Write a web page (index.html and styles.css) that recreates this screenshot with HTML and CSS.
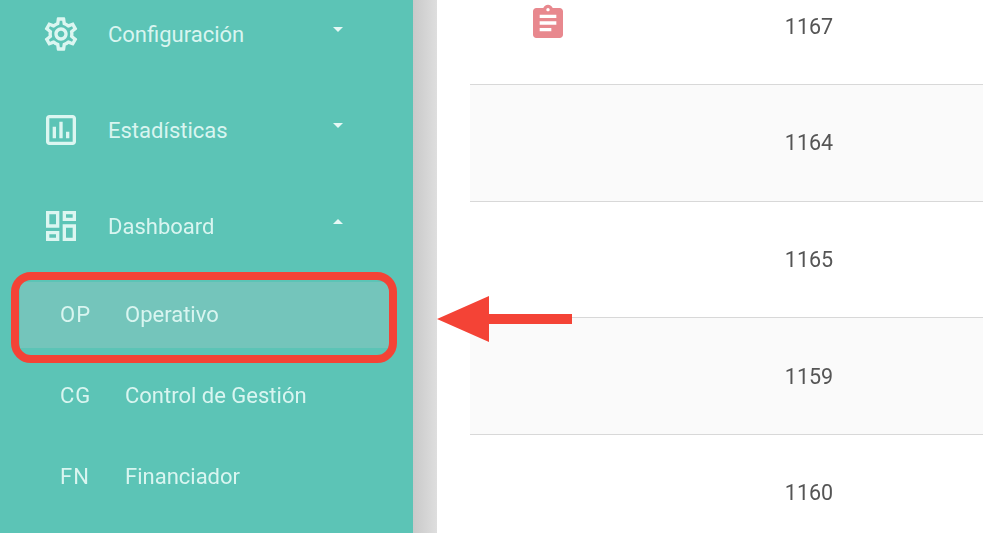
FILE: index.html
```html
<!DOCTYPE html>
<html lang="en">
<head>
  <meta charset="UTF-8" />
  <meta name="viewport" content="width=device-width, initial-scale=1" />
  <title>Dashboard Operativo</title>
  <link rel="stylesheet" href="styles.css">
</head>
<body>

  <div class="layout">
    <!-- Sidebar -->
    <nav class="sidebar">
      <a class="nav-item">
        <svg class="nav-icon" viewBox="0 0 24 24"><path d="M19.43 12.98c.04-.32.07-.64.07-.98 0-.34-.03-.66-.07-.98l2.11-1.65c.19-.15.24-.42.12-.64l-2-3.46c-.09-.16-.26-.25-.44-.25-.06 0-.12.01-.17.03l-2.49 1c-.52-.4-1.08-.73-1.69-.98l-.38-2.65C14.46 2.18 14.25 2 14 2h-4c-.25 0-.46.18-.49.42l-.38 2.65c-.61.25-1.17.59-1.69.98l-2.49-1c-.06-.02-.12-.03-.18-.03-.17 0-.34.09-.43.25l-2 3.46c-.13.22-.07.49.12.64l2.11 1.65c-.04.32-.07.65-.07.98 0 .33.03.66.07.98l-2.11 1.65c-.19.15-.24.42-.12.64l2 3.46c.09.16.26.25.44.25.06 0 .12-.01.17-.03l2.49-1c.52.4 1.08.73 1.69.98l.38 2.65c.03.24.24.42.49.42h4c.25 0 .46-.18.49-.42l.38-2.65c.61-.25 1.17-.59 1.69-.98l2.49 1c.06.02.12.03.18.03.17 0 .34-.09.43-.25l2-3.46c.12-.22.07-.49-.12-.64l-2.11-1.65zm-1.98-1.71c.04.31.05.52.05.73 0 .21-.02.43-.05.73l-.14 1.13.89.7 1.08.84-.7 1.21-1.27-.51-1.04-.42-.9.68c-.43.32-.84.56-1.25.73l-1.06.43-.16 1.13-.2 1.35h-1.4l-.19-1.35-.16-1.13-1.06-.43c-.43-.18-.83-.41-1.23-.71l-.91-.7-1.06.43-1.27.51-.7-1.21 1.08-.84.89-.7-.14-1.13c-.03-.31-.05-.54-.05-.74s.02-.43.05-.73l.14-1.13-.89-.7-1.08-.84.7-1.21 1.27.51 1.04.42.9-.68c.43-.32.84-.56 1.25-.73l1.06-.43.16-1.13.2-1.35h1.39l.19 1.35.16 1.13 1.06.43c.43.18.83.41 1.23.71l.91.7 1.06-.43 1.27-.51.7 1.21-1.07.85-.89.7.14 1.13zM12 8c-2.21 0-4 1.79-4 4s1.79 4 4 4 4-1.79 4-4-1.79-4-4-4zm0 6c-1.1 0-2-.9-2-2s.9-2 2-2 2 .9 2 2-.9 2-2 2z"/></svg>
        <span class="nav-label">Configuración</span>
        <span class="caret"></span>
      </a>
      <a class="nav-item">
        <svg class="nav-icon" viewBox="0 0 24 24"><path d="M19 3H5c-1.1 0-2 .9-2 2v14c0 1.1.9 2 2 2h14c1.1 0 2-.9 2-2V5c0-1.1-.9-2-2-2zm0 16H5V5h14v14zM7 10h2v7H7zm4-3h2v10h-2zm4 6h2v4h-2z"/></svg>
        <span class="nav-label">Estadísticas</span>
        <span class="caret"></span>
      </a>
      <a class="nav-item">
        <svg class="nav-icon" viewBox="0 0 24 24"><path d="M19 5v2h-4V5h4M9 5v6H5V5h4m10 8v6h-4v-6h4M9 17v2H5v-2h4M21 3h-8v6h8V3zM11 3H3v10h8V3zm10 8h-8v10h8V11zm-10 4H3v6h8v-6z"/></svg>
        <span class="nav-label">Dashboard</span>
        <span class="caret caret-up"></span>
      </a>

      <div class="sub-item active">
        <span class="sub-abbr">OP</span>
        <span>Operativo</span>
      </div>
      <div class="sub-item">
        <span class="sub-abbr">CG</span>
        <span>Control de Gestión</span>
      </div>
      <div class="sub-item">
        <span class="sub-abbr">FN</span>
        <span>Financiador</span>
      </div>
    </nav>

    <div class="gutter"></div>

    <!-- Table -->
    <main class="content">
      <div class="row">
        <div class="cell">
          <svg class="row-icon" viewBox="0 0 24 24"><path d="M19 3h-4.18C14.4 1.84 13.3 1 12 1c-1.3 0-2.4.84-2.82 2H5c-1.1 0-2 .9-2 2v14c0 1.1.9 2 2 2h14c1.1 0 2-.9 2-2V5c0-1.1-.9-2-2-2zm-7 0c.55 0 1 .45 1 1s-.45 1-1 1-1-.45-1-1 .45-1 1-1zm2 14H7v-2h7v2zm3-4H7v-2h10v2zm0-4H7V7h10v2z"/></svg>
        </div>
        <div class="cell">1167</div>
      </div>
      <div class="row striped"><div class="cell"></div><div class="cell">1164</div></div>
      <div class="row"><div class="cell"></div><div class="cell">1165</div></div>
      <div class="row striped"><div class="cell"></div><div class="cell">1159</div></div>
      <div class="row"><div class="cell"></div><div class="cell">1160</div></div>
    </main>
  </div>

  <!-- Annotation -->
  <div class="mark-box"></div>
  <svg class="mark-arrow" viewBox="0 0 136 48"><path d="M0 23L52 0V18H135V28H52V46Z"/></svg>

</body>
</html>
```

FILE: styles.css
```css
html, body {
  margin: 0;
  height: 100%;
  overflow: hidden;
}
body {
  font-family: Roboto, Arial, sans-serif;
  background: #fff;
  position: relative;
}
.layout {
  display: flex;
  height: 533px;
  overflow: hidden;
  filter: blur(0.4px);
}

/* Sidebar */
.sidebar {
  display: flex;
  flex-direction: column;
  flex: 0 0 413px;
  margin-top: -14px;
  background: #5cc4b6;
  color: #d9f5f0;
  font-size: 22px;
}
.nav-item {
  display: flex;
  align-items: center;
  flex: 0 0 96px;
  padding-left: 41px;
}
.nav-icon {
  width: 40px;
  height: 40px;
  margin-right: 27px;
  fill: #dcf6f1;
}
.nav-label {
  flex: 1;
}
.caret {
  width: 0;
  height: 0;
  margin: 0 70px 10px 0;
  border-left: 5px solid transparent;
  border-right: 5px solid transparent;
  border-top: 5px solid #e6f8f5;
}
.caret-up {
  border-top: none;
  border-bottom: 5px solid #e6f8f5;
}
.sub-item {
  display: flex;
  align-items: center;
  flex: 0 0 66px;
  margin: 7.5px 24px 7.5px 20px;
  padding-left: 40px;
}
.sub-item.active {
  background: #74c5bb;
}
.sub-abbr {
  width: 65px;
  letter-spacing: 1px;
}

/* Gutter shadow */
.gutter {
  flex: 0 0 24px;
  background: linear-gradient(to right, #c9c9c9, #dedede);
}

/* Table */
.content {
  flex: 1;
  margin-top: -31.6px;
  padding-left: 33px;
  background: #fff;
}
.row {
  display: grid;
  grid-template-columns: 156px 366px;
  height: 116.67px;
  box-sizing: border-box;
  border-bottom: 1px solid #d8d8d8;
  color: #555;
  font-size: 21.5px;
}
.row.striped {
  background: #fafafa;
}
.cell {
  display: flex;
  align-items: center;
  justify-content: center;
}
.row-icon {
  width: 40px;
  height: 40px;
  margin-top: -6px;
  fill: #e8888e;
}

/* Annotation */
.mark-box {
  position: absolute;
  left: 11px;
  top: 272px;
  width: 370px;
  height: 75px;
  border: 8px solid #f44336;
  border-radius: 20px;
}
.mark-arrow {
  position: absolute;
  left: 437px;
  top: 296px;
  width: 136px;
  height: 48px;
  fill: #f44336;
}
```
